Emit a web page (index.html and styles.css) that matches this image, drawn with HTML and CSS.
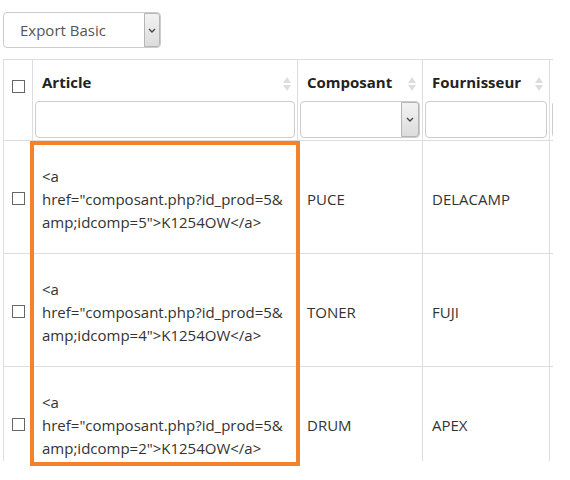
FILE: index.html
```html
<!DOCTYPE html>
<html lang="fr">
<head>
<meta charset="utf-8">
<title>Composants</title>
<link rel="stylesheet" href="styles.css">
</head>
<body>
<div class="page">
  <div class="toolbar">
    <div class="select-wrap export">
      <select class="select"><option>Export Basic</option></select>
      <span class="arrow"><svg width="8" height="5" viewBox="0 0 8 5"><path d="M1 1l3 3 3-3" fill="none" stroke="#444" stroke-width="1.3"/></svg></span>
    </div>
  </div>
  <div class="table-clip">
    <table class="grid">
      <colgroup>
        <col class="c-chk"><col class="c-art"><col class="c-comp"><col class="c-four"><col class="c-more">
      </colgroup>
      <thead>
        <tr>
          <th class="chk-cell"><input type="checkbox" class="chk"></th>
          <th><div class="th-title"><span>Article</span><span class="sort"><svg width="8" height="14" viewBox="0 0 8 14"><path d="M4 0L8 6H0z M4 14L0 8h8z" fill="#ddd"/></svg></span></div><input class="filter" type="text"></th>
          <th><div class="th-title"><span>Composant</span><span class="sort"><svg width="8" height="14" viewBox="0 0 8 14"><path d="M4 0L8 6H0z M4 14L0 8h8z" fill="#ddd"/></svg></span></div>
            <div class="select-wrap filter-select"><select class="select"><option></option></select><span class="arrow"><svg width="8" height="5" viewBox="0 0 8 5"><path d="M1 1l3 3 3-3" fill="none" stroke="#444" stroke-width="1.3"/></svg></span></div>
          </th>
          <th><div class="th-title"><span>Fournisseur</span><span class="sort"><svg width="8" height="14" viewBox="0 0 8 14"><path d="M4 0L8 6H0z M4 14L0 8h8z" fill="#ddd"/></svg></span></div><input class="filter" type="text"></th>
          <th><div class="th-title"><span>&nbsp;</span></div><input class="filter" type="text"></th>
        </tr>
      </thead>
      <tbody>
        <tr>
          <td class="chk-cell"><input type="checkbox" class="chk"></td>
          <td class="code">&lt;a <span class="url">href="composant.php?id_prod=5&amp;amp;idcomp=5"&gt;K1254OW&lt;/a&gt;</span></td>
          <td>PUCE</td>
          <td>DELACAMP</td>
          <td></td>
        </tr>
        <tr>
          <td class="chk-cell"><input type="checkbox" class="chk"></td>
          <td class="code">&lt;a <span class="url">href="composant.php?id_prod=5&amp;amp;idcomp=4"&gt;K1254OW&lt;/a&gt;</span></td>
          <td>TONER</td>
          <td>FUJI</td>
          <td></td>
        </tr>
        <tr>
          <td class="chk-cell"><input type="checkbox" class="chk"></td>
          <td class="code">&lt;a <span class="url">href="composant.php?id_prod=5&amp;amp;idcomp=2"&gt;K1254OW&lt;/a&gt;</span></td>
          <td>DRUM</td>
          <td>APEX</td>
          <td></td>
        </tr>
      </tbody>
    </table>
  </div>
  <div class="highlight"></div>
</div>
</body>
</html>
```

FILE: styles.css
```css
html, body {
  margin: 0;
  padding: 0;
  background: #fff;
}
body {
  font-family: "Open Sans", "Noto Sans", sans-serif;
  font-size: 15px;
  line-height: 23px;
  color: #333;
}
.page {
  position: relative;
  width: 570px;
  height: 480px;
  overflow: hidden;
}
.toolbar {
  padding: 12px 0 0 3px;
  height: 59px;
  box-sizing: border-box;
}
.select-wrap {
  position: relative;
  box-sizing: border-box;
}
.select {
  appearance: none;
  -webkit-appearance: none;
  display: block;
  width: 100%;
  height: 100%;
  box-sizing: border-box;
  border: 1px solid #ccc;
  border-radius: 4px;
  background: #fff;
  font-family: inherit;
  font-size: 15px;
  color: #555;
  margin: 0;
  outline: none;
}
.export {
  width: 158px;
  height: 36px;
}
.export .select {
  padding: 0 0 0 16px;
}
.arrow {
  position: absolute;
  top: 1px;
  right: 1px;
  bottom: 1px;
  width: 16px;
  box-sizing: border-box;
  border: 1px solid #b5b5b5;
  border-radius: 0 3px 3px 0;
  background: linear-gradient(#f2f2f2, #dcdcdc);
  display: flex;
  align-items: center;
  justify-content: center;
  pointer-events: none;
}
.table-clip {
  margin-left: 3px;
  width: 550px;
  height: 402px;
  overflow: hidden;
}
.grid {
  border-collapse: collapse;
  table-layout: fixed;
  width: 697px;
  border: 1px solid #ddd;
}
.c-chk { width: 29px; }
.c-art { width: 265px; }
.c-comp { width: 125px; }
.c-four { width: 127px; }
.c-more { width: 150px; }
.grid th, .grid td {
  border: 1px solid #ddd;
}
.grid th {
  padding: 0 2px 2px 2px;
  vertical-align: top;
  text-align: left;
  font-weight: 700;
  color: #222;
}
.th-title {
  display: flex;
  justify-content: space-between;
  align-items: center;
  padding: 11px 4px 7px 7px;
  line-height: 23px;
}
.sort {
  display: flex;
  margin-top: 2px;
}
.filter {
  display: block;
  width: 100%;
  height: 37px;
  box-sizing: border-box;
  margin: 0;
  border: 1px solid #ccc;
  border-radius: 4px;
  background: #fff;
  font-family: inherit;
  font-size: 15px;
  outline: none;
}
.filter-select {
  height: 37px;
}
.filter-select .arrow {
  width: 18px;
}
.grid th.chk-cell {
  padding: 20px 0 0 0;
}
.grid th.chk-cell .chk {
  display: block;
  margin: 0 auto;
}
.chk {
  appearance: none;
  -webkit-appearance: none;
  display: inline-block;
  vertical-align: middle;
  width: 13px;
  height: 13px;
  margin: 0;
  border: 1px solid #666;
  background: #fff;
  box-sizing: border-box;
}
.grid td {
  height: 108px;
  padding: 4px 9px 0 9px;
  vertical-align: middle;
  font-weight: 400;
}
.grid td.chk-cell {
  padding: 0;
  text-align: center;
}
.url {
  display: inline-block;
  width: 100%;
  word-break: break-all;
}
.highlight {
  position: absolute;
  left: 30px;
  top: 141px;
  width: 270px;
  height: 325px;
  box-sizing: border-box;
  border: 4px solid #f5822a;
  pointer-events: none;
}
```
